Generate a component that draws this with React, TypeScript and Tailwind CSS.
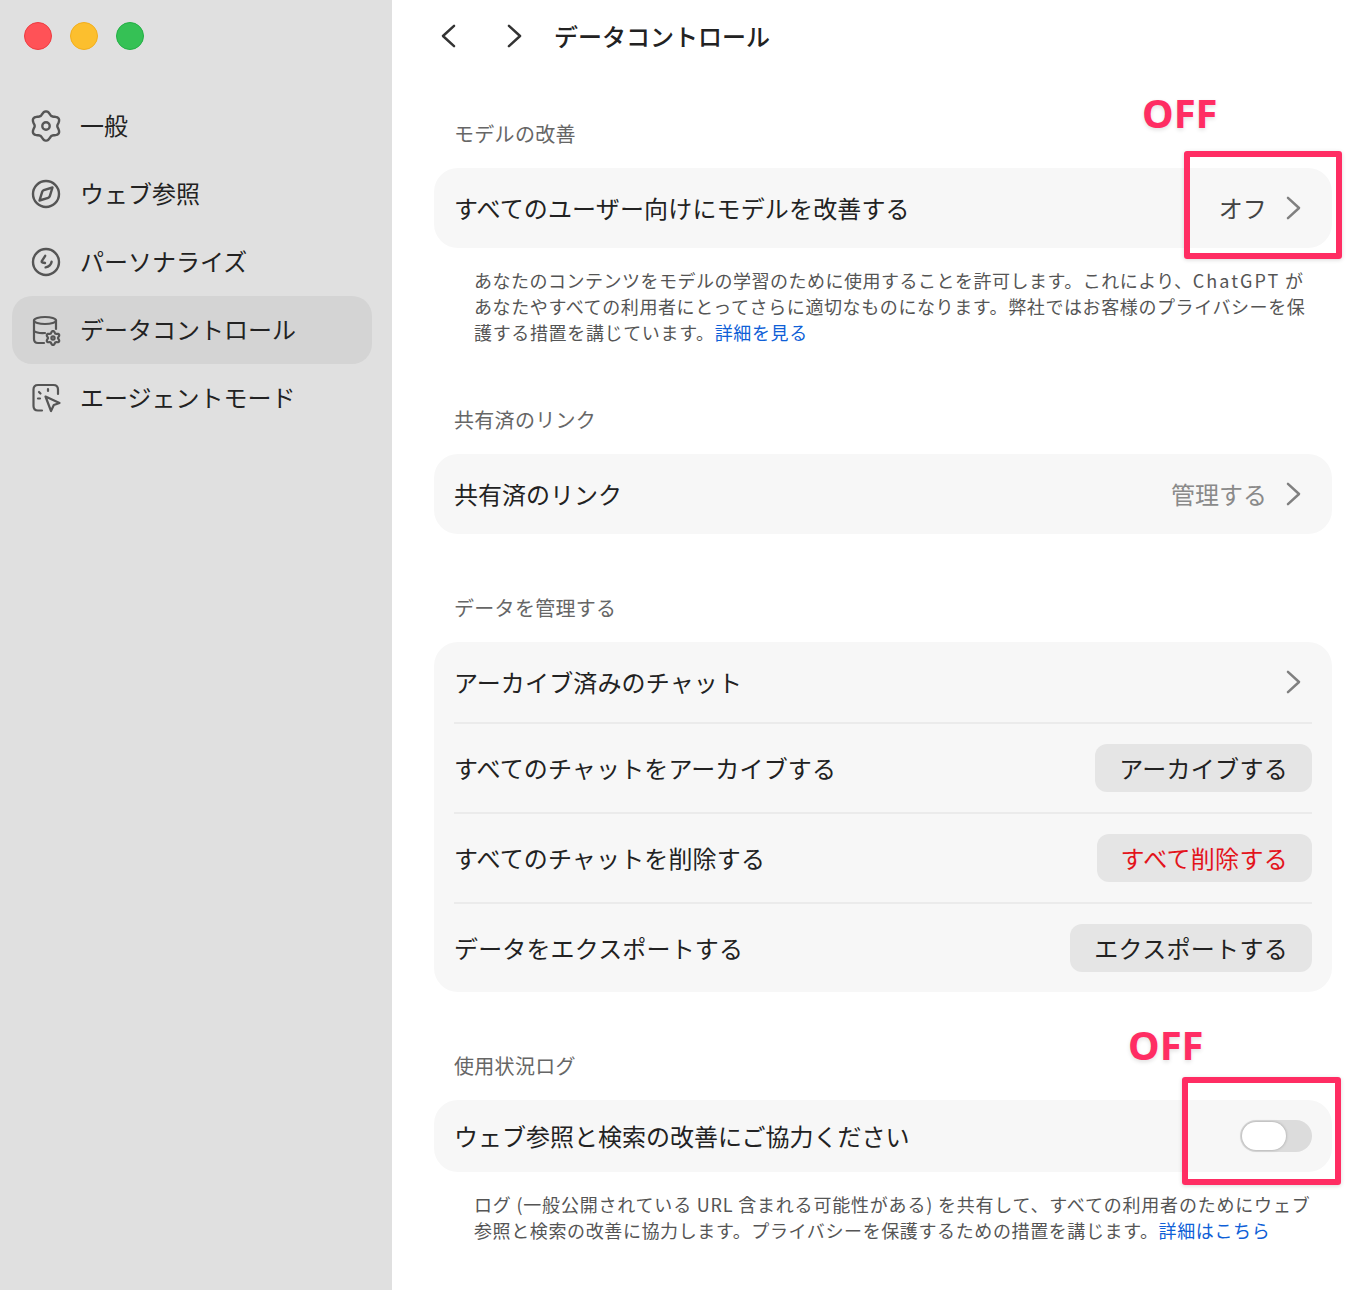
const lobedPath = (cx: number, cy: number, r: number, amp: number) => {
  let d = "";
  for (let i = 0; i < 72; i++) {
    const a = (i / 72) * Math.PI * 2;
    const rad = r + amp * Math.cos(6 * a);
    const x = cx + rad * Math.sin(a);
    const y = cy - rad * Math.cos(a);
    d += `${i === 0 ? "M" : "L"}${x.toFixed(2)} ${y.toFixed(2)}`;
  }
  return d + "Z";
};

const iconClass = "w-7 h-7 shrink-0 overflow-visible text-[#555555]";

const GearIcon = () => (
  <svg viewBox="0 0 28 28" fill="none" stroke="currentColor" strokeWidth="2.4" className={iconClass}>
    <path d={lobedPath(14, 14, 13, 1.7)} strokeLinejoin="round" />
    <circle cx="14" cy="14" r="3.7" />
  </svg>
);

const CompassIcon = () => (
  <svg viewBox="0 0 28 28" fill="none" stroke="currentColor" strokeWidth="2.4" className={iconClass}>
    <circle cx="14" cy="14" r="13" />
    <path d="M20.5 7.5 L17.8 16.2 Q17.4 17.4 16.2 17.8 L7.5 20.5 L10.2 11.8 Q10.6 10.6 11.8 10.2 Z" strokeLinejoin="round" />
  </svg>
);

const PersonalizeIcon = () => (
  <svg viewBox="0 0 28 28" fill="none" stroke="currentColor" strokeWidth="2.4" strokeLinecap="round" className={iconClass}>
    <circle cx="14" cy="14" r="13" />
    <path d="M13.2 7.8 L9.8 13.2 Q9.4 14.2 10.6 14.5 L13 15" strokeLinejoin="round" />
    <path d="M19.6 13.8 Q18.8 18.4 13.6 19.4" />
  </svg>
);

const DataIcon = () => (
  <svg viewBox="0 0 28 28" fill="none" stroke="currentColor" strokeWidth="2.2" strokeLinecap="round" className={iconClass}>
    <ellipse cx="13" cy="4.5" rx="11" ry="3.5" />
    <path d="M24 4.5 V13" />
    <path d="M2 4.5 V23 Q2 27 6 27 H12" />
    <path d="M2 15 Q5 17.5 13 17" />
    <path d={lobedPath(21, 22, 6, 1)} strokeLinejoin="round" />
    <circle cx="21" cy="22" r="1.6" />
  </svg>
);

const AgentIcon = () => (
  <svg viewBox="0 0 28 28" fill="none" stroke="currentColor" strokeWidth="2.2" strokeLinecap="round" strokeLinejoin="round" className={iconClass}>
    <path d="M26 10 V5.5 Q26 1 21.5 1 H6 Q1.5 1 1.5 5.5 V22 Q1.5 26.5 6 26.5 H10" />
    <path d="M13.5 12.5 L27.5 19 L21.8 21 L19 27 Z" />
    <path d="M16 5 V7" />
    <path d="M7 8 L8.5 9.5" />
    <path d="M6 14.5 H8" />
  </svg>
);

const Chevron = ({ className }: { className: string }) => (
  <svg viewBox="0 0 16 26" fill="none" stroke="currentColor" strokeWidth="2.7" strokeLinecap="round" strokeLinejoin="round" className={className}>
    <path d="M2 2 L14 13 L2 24" />
  </svg>
);

const BackChevron = ({ className }: { className: string }) => (
  <svg viewBox="0 0 16 26" fill="none" stroke="currentColor" strokeWidth="2.7" strokeLinecap="round" strokeLinejoin="round" className={className}>
    <path d="M14 2 L2 13 L14 24" />
  </svg>
);

const navItems = [
  { label: "一般", icon: <GearIcon /> },
  { label: "ウェブ参照", icon: <CompassIcon /> },
  { label: "パーソナライズ", icon: <PersonalizeIcon /> },
  { label: "データコントロール", icon: <DataIcon />, active: true },
  { label: "エージェントモード", icon: <AgentIcon /> },
];

const Sidebar = () => (
  <aside className="w-[392px] shrink-0 bg-[#e0e0e0] px-3 pt-[22px]">
    <div className="flex gap-[18px] pl-3">
      <span className="h-7 w-7 rounded-full border border-[#ee3b40] bg-[#ff5257]" />
      <span className="h-7 w-7 rounded-full border border-[#f2ae1c] bg-[#fcbf2e]" />
      <span className="h-7 w-7 rounded-full border border-[#22b044] bg-[#35c155]" />
    </div>
    <nav className="mt-[42px] flex w-[360px] flex-col">
      {navItems.map((item) => (
        <div
          key={item.label}
          className={`flex h-[68px] items-center gap-5 rounded-[20px] pl-5 text-[24px] leading-8 text-[#222222] ${item.active ? "bg-[#d4d4d4]" : ""}`}
        >
          {item.icon}
          <span className="pb-[2px]">{item.label}</span>
        </div>
      ))}
    </nav>
  </aside>
);

const SectionLabel = ({ children, className }: { children: string; className: string }) => (
  <div className={`pl-5 text-[20px] leading-7 tracking-[0.3px] text-[#666666] ${className}`}>{children}</div>
);

const Desc = ({ children }: { children: React.ReactNode }) => (
  <p className="ml-10 mt-[19px] whitespace-nowrap text-[18px] leading-[26px] text-[#555555]">{children}</p>
);

const ActionButton = ({ children, danger }: { children: string; danger?: boolean }) => (
  <button className={`h-12 rounded-xl bg-[#e5e5e5] px-6 text-[24px] leading-8 tracking-[0.3px] ${danger ? "text-[#e3141c]" : "text-[#222222]"}`}>
    {children}
  </button>
);

const ActionRow = ({ label, children, last }: { label: string; children: React.ReactNode; last?: boolean }) => (
  <div className={`mx-5 flex items-center justify-between ${last ? "h-[88px]" : "h-[90px] border-b-2 border-[#ebebeb]"}`}>
    <span>{label}</span>
    {children}
  </div>
);

export default function App() {
  return (
    <div className="relative flex h-[1290px] w-[1362px] overflow-hidden bg-white font-['Noto_Sans_CJK_JP','Noto_Sans',sans-serif] text-[#222222]">
      <Sidebar />
      <main className="w-[970px] pl-[42px]">
        <header className="flex h-[72px] items-center pl-[7px]">
          <BackChevron className="h-[24px] w-[15px] text-[#333333]" />
          <Chevron className="ml-[51px] h-[24px] w-[15px] text-[#333333]" />
          <h1 className="ml-[32px] text-[24px] font-medium leading-8">データコントロール</h1>
        </header>
        <div className="w-[898px] tracking-[0.15px]">
          <SectionLabel className="mt-[48px]">モデルの改善</SectionLabel>
          <div className="mt-5 flex h-20 items-center justify-between rounded-3xl bg-[#f7f7f7] pl-5 pr-[31px] text-[24px]">
            <span>すべてのユーザー向けにモデルを改善する</span>
            <span className="flex items-center gap-[19px] text-[#444444]">
              オフ
              <Chevron className="h-[24px] w-[15px] text-[#808080]" />
            </span>
          </div>
          <Desc>
            <span className="tracking-[0.5px]">
              あなたのコンテンツをモデルの学習のために使用することを許可します。これにより、<span className="tracking-[2.1px]">ChatGPT</span> が
            </span>
            <br />
            <span className="tracking-[0.6px]">あなたやすべての利用者にとってさらに適切なものになります。弊社ではお客様のプライバシーを保</span>
            <br />
            <span className="tracking-[0.65px]">
              護する措置を講じています。
              <span className="text-[#0f5fd7]">詳細を見る</span>
            </span>
          </Desc>

          <SectionLabel className="mt-[61px]">共有済のリンク</SectionLabel>
          <div className="mt-5 flex h-20 items-center justify-between rounded-3xl bg-[#f7f7f7] pl-5 pr-[31px] text-[24px] tracking-normal">
            <span>共有済のリンク</span>
            <span className="flex items-center gap-[19px] text-[#8a8a8a]">
              管理する
              <Chevron className="h-[24px] w-[15px] text-[#808080]" />
            </span>
          </div>

          <SectionLabel className="mt-[60px]">データを管理する</SectionLabel>
          <div className="mt-5 rounded-3xl bg-[#f7f7f7] text-[24px]">
            <div className="mx-5 flex h-[82px] items-center justify-between border-b-2 border-[#ebebeb] pr-[11px]">
              <span>アーカイブ済みのチャット</span>
              <Chevron className="h-[24px] w-[15px] text-[#808080]" />
            </div>
            <ActionRow label="すべてのチャットをアーカイブする">
              <ActionButton>アーカイブする</ActionButton>
            </ActionRow>
            <ActionRow label="すべてのチャットを削除する">
              <ActionButton danger>すべて削除する</ActionButton>
            </ActionRow>
            <ActionRow label="データをエクスポートする" last>
              <ActionButton>エクスポートする</ActionButton>
            </ActionRow>
          </div>

          <SectionLabel className="mt-[60px]">使用状況ログ</SectionLabel>
          <div className="mt-5 flex h-[72px] items-center justify-between rounded-3xl bg-[#f7f7f7] pl-5 pr-5 text-[24px] tracking-normal">
            <span>ウェブ参照と検索の改善にご協力ください</span>
            <span className="flex h-8 w-[72px] items-center rounded-full bg-[#dcdcdc] pl-[2px]">
              <span className="h-7 w-11 rounded-full bg-white shadow-[0_0_3px_rgba(0,0,0,0.3)]" />
            </span>
          </div>
          <Desc>
            <span className="tracking-[0.8px]">ログ (一般公開されている URL 含まれる可能性がある) を共有して、すべての利用者のためにウェブ</span>
            <br />
            <span className="tracking-[0.61px]">
              参照と検索の改善に協力します。プライバシーを保護するための措置を講じます。
              <span className="text-[#0f5fd7]">詳細はこちら</span>
            </span>
          </Desc>
        </div>
      </main>

      {/* annotations on top of the screenshot */}
      <div className="absolute left-[1142px] top-[87px] font-['Noto_Sans',sans-serif] text-[40px] font-bold leading-[52px] text-[#ff2d63] [text-shadow:0_2px_4px_rgba(0,0,0,0.12)]">OFF</div>
      <div className="absolute left-[1184px] top-[151px] h-[108px] w-[158px] rounded-[3px] border-[6px] border-[#ff2d63] shadow-[0_1px_4px_rgba(0,0,0,0.15)]" />
      <div className="absolute left-[1128px] top-[1019px] font-['Noto_Sans',sans-serif] text-[40px] font-bold leading-[52px] text-[#ff2d63] [text-shadow:0_2px_4px_rgba(0,0,0,0.12)]">OFF</div>
      <div className="absolute left-[1182px] top-[1077px] h-[108px] w-[159px] rounded-[3px] border-[6px] border-[#ff2d63] shadow-[0_1px_4px_rgba(0,0,0,0.15)]" />
    </div>
  );
}
